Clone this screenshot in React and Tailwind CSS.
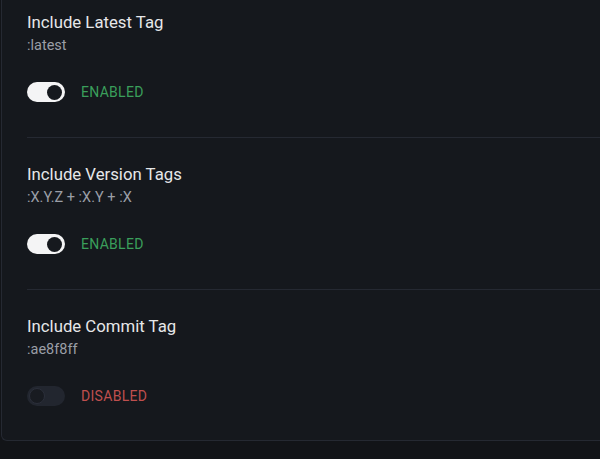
const tags = [
  { title: "Include Latest Tag", sub: ":latest", on: true },
  { title: "Include Version Tags", sub: ":X.Y.Z + :X.Y + :X", on: true },
  { title: "Include Commit Tag", sub: ":ae8f8ff", on: false },
];

const Toggle = ({ on }) => (
  <div
    className={
      on
        ? "w-[38px] h-5 rounded-full bg-[#f4f4f5] flex items-center justify-end px-[3px]"
        : "w-[38px] h-5 rounded-full bg-[#22262f] flex items-center justify-start px-[2px]"
    }
  >
    <div
      className={
        on
          ? "w-[15px] h-[15px] rounded-full bg-[#16191e]"
          : "w-4 h-4 rounded-full bg-[#181b21] border border-[#2b2f3a]"
      }
    />
  </div>
);

export default function App() {
  return (
    <div
      className="w-[600px] h-[459px] overflow-hidden bg-[#121418]"
      style={{ fontFamily: "Roboto, 'Noto Sans', sans-serif" }}
    >
      <div className="-mt-[14px] ml-px w-[640px] bg-[#15181d] border-l border-b border-[#252932] rounded-bl-md pl-[25px]">
        {tags.map((t, i) => (
          <div
            key={t.title}
            className={
              i < tags.length - 1
                ? "pt-6 pb-[35px] border-b border-[#252932]"
                : "pt-6 pb-[34px]"
            }
          >
            <div className="text-[16.75px] leading-6 text-[#e6e7e9]">{t.title}</div>
            <div className="mt-0.5 text-[14.5px] leading-5 text-[#9a9ea6]">{t.sub}</div>
            <div className="mt-[26px] flex items-center gap-4">
              <Toggle on={t.on} />
              <span
                className={
                  t.on
                    ? "text-[14px] leading-5 tracking-[0.3px] text-[#3a9f5b]"
                    : "text-[14px] leading-5 tracking-[0.3px] text-[#bf4f4e]"
                }
              >
                {t.on ? "ENABLED" : "DISABLED"}
              </span>
            </div>
          </div>
        ))}
      </div>
    </div>
  );
}
